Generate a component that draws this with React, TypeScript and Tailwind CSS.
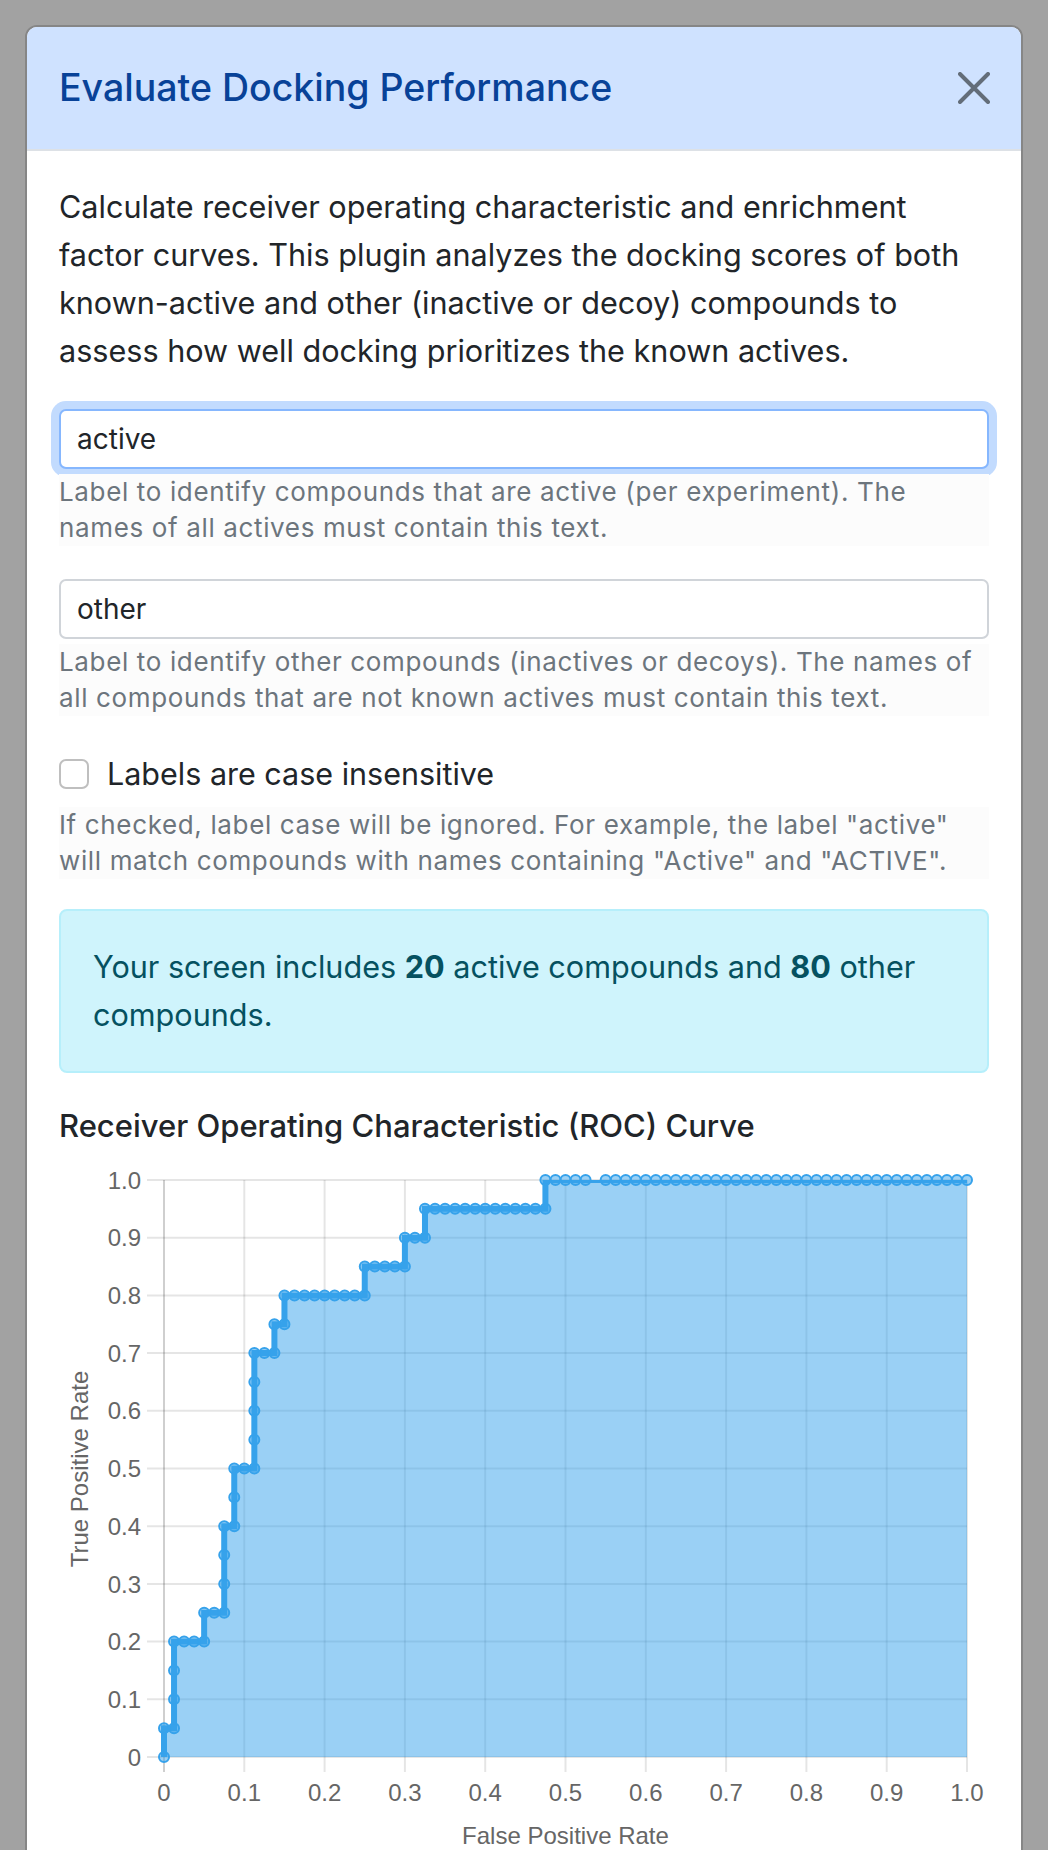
import React from "react";

type Pt = [number, number];

const SEQ: [string, number][] = [
  ["U", 1], ["R", 1], ["U", 3], ["R", 3], ["U", 1], ["R", 2], ["U", 3], ["R", 1],
  ["U", 2], ["R", 2], ["U", 4], ["R", 2], ["U", 1], ["R", 1], ["U", 1], ["R", 8],
  ["U", 1], ["R", 4], ["U", 1], ["R", 2], ["U", 1], ["R", 12], ["U", 1], ["R", 42],
];

function buildPoints(): Pt[] {
  const pts: Pt[] = [[0, 0]];
  let i = 0;
  let j = 0;
  for (const [m, n] of SEQ) {
    for (let k = 0; k < n; k++) {
      if (m === "U") j++;
      else i++;
      pts.push([i, j]);
    }
  }
  return pts;
}

function RocChart() {
  const X0 = 105;
  const XS = 803;
  const Y0 = 607;
  const YS = 577;
  const sx = (i: number) => X0 + (i / 80) * XS;
  const sy = (j: number) => Y0 - (j / 20) * YS;
  const pts = buildPoints();
  const line = pts.map((p, k) => `${k ? "L" : "M"}${sx(p[0]).toFixed(2)},${sy(p[1]).toFixed(2)}`).join(" ");
  const fill = `${line} L${sx(80)},${Y0} L${sx(0)},${Y0} Z`;
  const ticks = [0, 1, 2, 3, 4, 5, 6, 7, 8, 9, 10];
  const label = (k: number) => (k === 0 ? "0" : k === 10 ? "1.0" : `0.${k}`);
  const grid = "rgba(0,0,0,0.1)";
  return (
    <svg width={930} height={700} className="block" style={{ fontFamily: "'Liberation Sans', Arial, sans-serif" }}>
      <defs>
        <clipPath id="roc-clip">
          <rect x={-20} y={30} width={980} height={700} />
        </clipPath>
      </defs>
      {ticks.map((k) => {
        const y = Y0 - (k * YS) / 10;
        return <line key={`h${k}`} x1={88} x2={908} y1={y} y2={y} stroke={grid} strokeWidth={2} />;
      })}
      {ticks.map((k) => {
        const x = X0 + (k * XS) / 10;
        return (
          <line
            key={`v${k}`}
            x1={x}
            x2={x}
            y1={30}
            y2={622}
            stroke={k === 0 ? "rgba(0,0,0,0.19)" : grid}
            strokeWidth={2}
          />
        );
      })}
      <path d={fill} fill="rgba(54,162,235,0.5)" clipPath="url(#roc-clip)" />
      <path
        d={line}
        fill="none"
        stroke="#36a2eb"
        strokeWidth={6}
        strokeLinejoin="miter"
        clipPath="url(#roc-clip)"
      />
      {pts.map((p, k) =>
        p[1] === 20 && p[0] === 43 ? null : (
          <circle
            key={`c${k}`}
            cx={sx(p[0])}
            cy={sy(p[1])}
            r={5}
            fill="rgba(54,162,235,0.5)"
            stroke="#36a2eb"
            strokeWidth={2}
          />
        )
      )}
      {ticks.map((k) => (
        <text key={`yl${k}`} x={82} y={Y0 - (k * YS) / 10 + 8.6} textAnchor="end" fontSize={24} fill="#666666">
          {label(k)}
        </text>
      ))}
      {ticks.map((k) => (
        <text key={`xl${k}`} x={X0 + (k * XS) / 10} y={650.6} textAnchor="middle" fontSize={24} fill="#666666">
          {label(k)}
        </text>
      ))}
      <text x={506.5} y={694} textAnchor="middle" fontSize={24} fill="#666666">
        False Positive Rate
      </text>
      <text x={29} y={319} textAnchor="middle" fontSize={24} fill="#666666" transform="rotate(-90 29 319)">
        True Positive Rate
      </text>
    </svg>
  );
}

function FormText({ lines, className = "" }: { lines: string[]; className?: string }) {
  return (
    <div
      className={`bg-[#fcfcfc] text-[26px] leading-[36px] tracking-[0.64px] text-[#6c757d] whitespace-nowrap ${className}`}
    >
      {lines.map((l, i) => (
        <div key={i}>{l}</div>
      ))}
    </div>
  );
}

export default function App() {
  return (
    <div className="w-[1048px] h-[1850px] overflow-hidden bg-[#a2a2a2] pl-[25px] pt-[25px] font-['Inter',sans-serif]">
      <div className="w-[998px] min-h-[1830px] bg-white border-2 border-[#868686] rounded-t-[12px] overflow-hidden">
        <div className="h-[124px] bg-[#cfe2ff] border-b-2 border-[#dde1e6] flex items-center justify-between pl-[32px] pr-[31px]">
          <h1 className="text-[37.5px] leading-[60px] font-medium text-[#084298]">Evaluate Docking Performance</h1>
          <svg width={32} height={32} viewBox="0 0 32 32" className="block">
            <path d="M2 2 L30 30 M30 2 L2 30" stroke="#636d79" strokeWidth={4} strokeLinecap="round" fill="none" />
          </svg>
        </div>
        <div className="px-[32px] pt-[32px]">
          <p className="text-[30.6px] leading-[48px] text-[#212529] whitespace-nowrap mb-[34px]">
            Calculate receiver operating characteristic and enrichment
            <br />
            factor curves. This plugin analyzes the docking scores of both
            <br />
            known-active and other (inactive or decoy) compounds to
            <br />
            assess how well docking prioritizes the known actives.
          </p>
          <input
            type="text"
            readOnly
            defaultValue="active"
            className="block w-full h-[60px] border-2 border-[#86b7fe] rounded-[7px] shadow-[0_0_0_8px_#c2dbfe] px-[16px] text-[28px] text-[#212529] bg-white outline-none"
          />
          <FormText
            className="mt-[5px]"
            lines={["Label to identify compounds that are active (per experiment). The", "names of all actives must contain this text."]}
          />
          <input
            type="text"
            readOnly
            defaultValue="other"
            className="mt-[33px] block w-full h-[60px] border-2 border-[#d0d4d9] rounded-[7px] px-[16px] text-[28px] text-[#212529] bg-white outline-none"
          />
          <FormText
            className="mt-[5px]"
            lines={[
              "Label to identify other compounds (inactives or decoys). The names of",
              "all compounds that are not known actives must contain this text.",
            ]}
          />
          <div className="mt-[34px] h-[48px] flex items-center gap-[18px]">
            <div className="w-[30px] h-[30px] border-2 border-[#bfbfbf] rounded-[7px] bg-white" />
            <span className="text-[30.5px] leading-[48px] text-[#212529]">Labels are case insensitive</span>
          </div>
          <FormText
            className="mt-[9px]"
            lines={[
              'If checked, label case will be ignored. For example, the label "active"',
              'will match compounds with names containing "Active" and "ACTIVE".',
            ]}
          />
          <div className="mt-[30px] border-2 border-[#b6effb] bg-[#cff4fc] rounded-[8px] p-[32px] text-[30.6px] leading-[48px] text-[#055160] whitespace-nowrap">
            Your screen includes <b className="font-bold">20</b> active compounds and <b className="font-bold">80</b> other
            <br />
            compounds.
          </div>
          <h2 className="mt-[35px] text-[31px] leading-[36px] font-medium text-[#212529]">
            Receiver Operating Characteristic (ROC) Curve
          </h2>
          <div className="mt-[6px]">
            <RocChart />
          </div>
        </div>
      </div>
    </div>
  );
}
